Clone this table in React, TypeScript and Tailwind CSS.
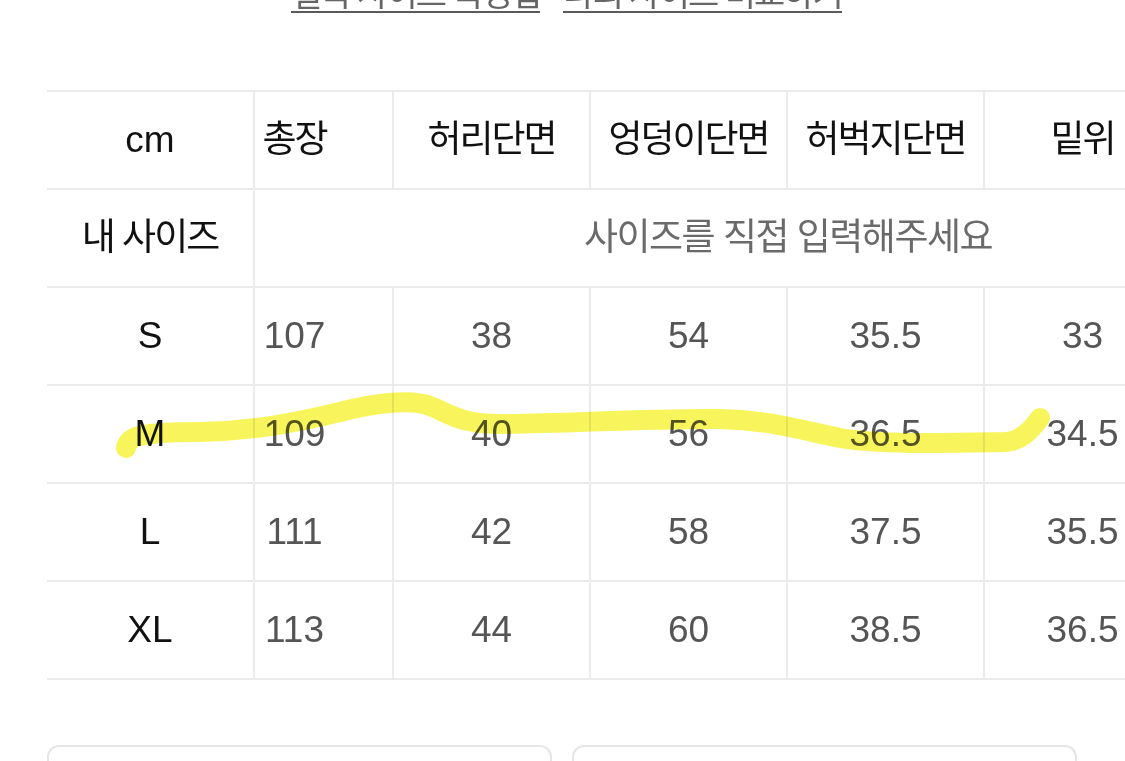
import React from "react";

const columns = ["총장", "허리단면", "엉덩이단면", "허벅지단면", "밑위", "밑단단면"];

const sizes = [
  { name: "S", values: ["107", "38", "54", "35.5", "33", "22"] },
  { name: "M", values: ["109", "40", "56", "36.5", "34.5", "23"] },
  { name: "L", values: ["111", "42", "58", "37.5", "35.5", "24"] },
  { name: "XL", values: ["113", "44", "60", "38.5", "36.5", "25"] },
];

const font = { fontFamily: '"Liberation Sans", "Noto Sans CJK KR", sans-serif' };

const Row = ({ label, children }: { label: React.ReactNode; children: React.ReactNode }) => (
  <div className="flex h-[98px] border-b-2 border-[#ebebeb]">
    <div className="w-[208px] shrink-0 flex items-center justify-center border-r-2 border-[#ebebeb] bg-white relative z-10">
      {label}
    </div>
    <div className="flex-1 overflow-hidden">
      <div className="flex h-full -ml-[58px]">{children}</div>
    </div>
  </div>
);

export default function App() {
  return (
    <div className="relative w-[1125px] h-[761px] overflow-hidden bg-white" style={font}>
      {/* links, cut off at the top */}
      <div className="flex justify-center gap-[23px] -mt-[22px] pl-[8px]">
        <span className="inline-block leading-[33px] border-b-2 border-[#5a5a5a] text-[34px] tracking-[-2px] text-[#666]">
          실측 사이즈 측정법
        </span>
        <span className="inline-block leading-[33px] border-b-2 border-[#5a5a5a] text-[34px] tracking-[-2px] text-[#666]">
          나의 사이즈 비교하기
        </span>
      </div>

      {/* size table */}
      <div className="ml-[47px] mt-[77px] border-t-2 border-[#ebebeb]">
        <Row label={<span className="text-[37px] text-[#111]">cm</span>}>
          {columns.map((c) => (
            <div
              key={c}
              className="w-[197px] shrink-0 flex items-center justify-center border-r-2 border-[#ebebeb] text-[37px] tracking-[-2px] text-[#111]"
            >
              {c}
            </div>
          ))}
        </Row>
        <Row label={<span className="text-[37px] tracking-[-2px] text-[#111]">내 사이즈</span>}>
          <div className="w-[1182px] shrink-0 flex items-center justify-center text-[37px] tracking-[-1.5px] text-[#6a6a6a]">
            사이즈를 직접 입력해주세요
          </div>
        </Row>
        {sizes.map((s) => (
          <Row key={s.name} label={<span className="text-[37px] text-[#111]">{s.name}</span>}>
            {s.values.map((v, i) => (
              <div
                key={i}
                className="w-[197px] shrink-0 flex items-center justify-center border-r-2 border-[#ebebeb] text-[37px] text-[#555]"
              >
                {v}
              </div>
            ))}
          </Row>
        ))}
      </div>

      {/* buttons below */}
      <div className="flex gap-[20px] ml-[47px] mt-[65px]">
        <div className="w-[505px] h-[60px] rounded-xl border-2 border-[#e6e6e6]" />
        <div className="w-[505px] h-[60px] rounded-xl border-2 border-[#e6e6e6]" />
      </div>

      {/* yellow highlighter stroke over the M row */}
      <svg
        className="absolute left-0 top-0 z-20 pointer-events-none mix-blend-multiply"
        width="1125"
        height="761"
        viewBox="0 0 1125 761"
      >
        <path
          d="M126,448 C128,436 140,432 200,432 C250,431 290,424 340,412 C370,404 410,398 430,406 C450,414 460,424 500,424 C560,424 650,418 720,419 C770,420 800,430 840,438 C880,445 950,443 1005,442 C1020,441 1030,432 1040,418"
          fill="none"
          stroke="#f8f55c"
          strokeWidth="20"
          strokeLinecap="round"
          strokeLinejoin="round"
        />
      </svg>
    </div>
  );
}
